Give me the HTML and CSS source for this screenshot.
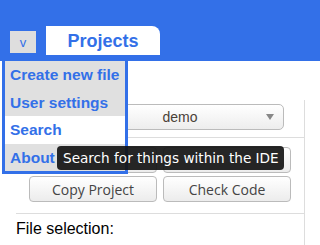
FILE: index.html
```html
<!DOCTYPE html>
<html lang="en">
<head>
  <meta charset="UTF-8" />
  <title>Projects</title>
  <link rel="stylesheet" href="styles.css">
</head>
<body>
  <header class="topbar">
    <button class="menu-toggle">v</button>
    <div class="tab">Projects</div>
  </header>

  <div class="menu">
    <a href="#">Create new file</a>
    <a href="#">User settings</a>
    <a href="#" class="hover">Search</a>
    <a href="#">About</a>
  </div>
  <div class="tooltip">Search for things within the IDE</div>

  <div class="panel">
    <div class="select">demo<span class="arrow"></span></div>
    <div class="sep"></div>
    <div class="buttons">
      <button></button>
      <button></button>
      <button>Copy Project</button>
      <button>Check Code</button>
    </div>
    <div class="sep wide"></div>
    <div class="label">File selection:</div>
  </div>
</body>
</html>
```

FILE: styles.css
```css
body {
  margin: 0;
  font-family: 'Liberation Sans', Arial, sans-serif;
  background-color: #ffffff;
  position: relative;
  height: 245px;
  overflow: hidden;
}

.topbar {
  height: 61px;
  box-sizing: border-box;
  background-color: #3370e8;
  display: flex;
  align-items: flex-end;
  gap: 10px;
  padding: 0 0 6px 10px;
}

.menu-toggle {
  width: 26px;
  height: 22px;
  margin-bottom: 2px;
  border: none;
  background: #dedede;
  color: #3370e8;
  font-family: 'Liberation Sans', Arial, sans-serif;
  font-size: 13px;
  padding: 0;
}

.tab {
  width: 114px;
  height: 29px;
  background: #ffffff;
  border-top-right-radius: 8px;
  color: #3370e8;
  font-weight: bold;
  font-size: 18px;
  text-align: center;
  line-height: 31px;
}

.menu {
  position: absolute;
  left: 2px;
  top: 58px;
  width: 120px;
  border: 3px solid #3370e8;
  background: #e0e0e0;
  z-index: 10;
}

.menu a {
  display: block;
  height: 27.5px;
  line-height: 27.5px;
  padding-left: 5px;
  color: #3370e8;
  font-weight: bold;
  font-size: 15.5px;
  text-decoration: none;
}

.menu a.hover {
  background: #ffffff;
}

.tooltip {
  position: absolute;
  left: 57px;
  top: 146px;
  height: 24px;
  line-height: 24px;
  padding: 0 5px 0 6px;
  background: rgba(20, 20, 20, 0.92);
  color: #ffffff;
  border-radius: 4px;
  font-family: 'DejaVu Sans', sans-serif;
  font-size: 13.6px;
  white-space: nowrap;
  z-index: 20;
}

.panel {
  margin: 39px 0 0 16px;
  width: 288px;
  padding-top: 4px;
  border-right: 1px solid #dddddd;
  height: 141px;
}

.select {
  position: relative;
  margin-left: 60px;
  width: 208px;
  height: 26px;
  box-sizing: border-box;
  border: 1px solid #bbbbbb;
  border-radius: 5px;
  background: linear-gradient(#ffffff, #ededed);
  text-align: center;
  line-height: 24px;
  font-size: 14px;
  color: #4a4238;
}

.arrow {
  position: absolute;
  right: 9px;
  top: 9px;
  border-left: 4px solid transparent;
  border-right: 4px solid transparent;
  border-top: 6px solid #888888;
}

.sep {
  height: 1px;
  background: #dddddd;
  margin: 7px 0 9px;
}

.sep.wide {
  margin: 11px 0 6px;
}

.buttons {
  display: grid;
  grid-template-columns: 128px 128px;
  gap: 3px 6px;
  margin-left: 13px;
}

.buttons button {
  height: 26px;
  border: 1px solid #bbbbbb;
  border-radius: 4px;
  background: linear-gradient(#ffffff, #ececec);
  color: #444444;
  font-family: 'Open Sans', sans-serif;
  font-size: 14px;
  padding: 0;
}

.label {
  font-size: 16px;
  color: #000000;
}
```
